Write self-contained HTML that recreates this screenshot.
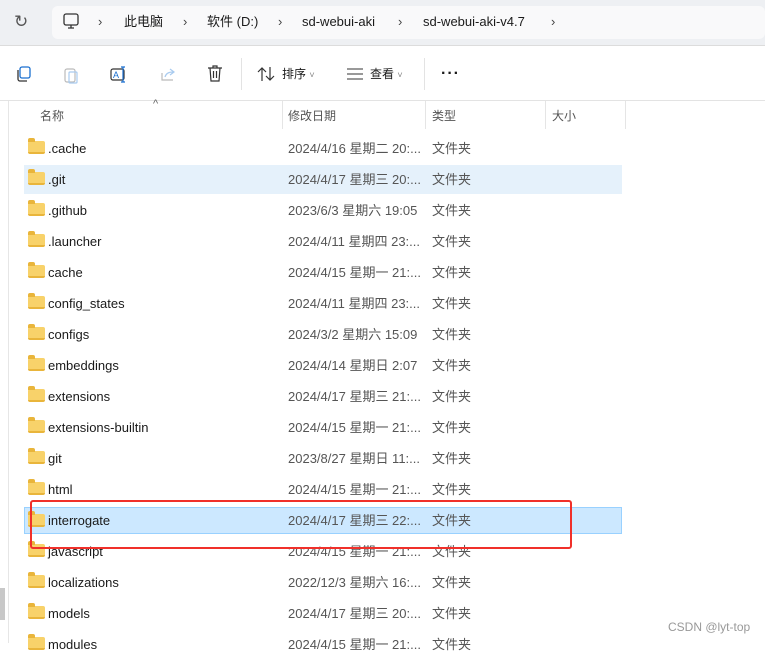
<!DOCTYPE html><html><head><meta charset="utf-8"><style>
*{margin:0;padding:0;box-sizing:border-box}
body{width:765px;height:643px;overflow:hidden;background:#fff;font-family:"Liberation Sans","Noto Sans CJK SC",sans-serif;font-size:13px;line-height:16px;color:#1a1a1a;position:relative}
.a{position:absolute;white-space:nowrap}
.top{position:absolute;left:0;top:0;width:765px;height:46px;background:#eef0f3;border-bottom:1px solid #dcdcdc}
.crumb{position:absolute;left:52px;top:6px;width:713px;height:33px;background:#f9f9fa;border-radius:6px}
.tb{position:absolute;left:0;top:47px;width:765px;height:54px;border-bottom:1px solid #e3e3e3}
.row{position:absolute;left:24px;width:598px;height:29px}
.row .n{position:absolute;left:24px;top:7px}
.row .d{position:absolute;left:264px;top:7px;color:#555}
.row .t{position:absolute;left:408px;top:7px;color:#555}
.f{position:absolute;left:4px;top:7px;width:17px;height:13px;background:#f8d26a;border-radius:2px;border-bottom:2px solid #e9b53b}
.f:before{content:"";position:absolute;left:0;top:-3px;width:7px;height:4px;background:#e9b53b;border-radius:2px 2px 0 0}
.sep{position:absolute;top:101px;width:1px;height:28px;background:#e5e5e5}
.hd{position:absolute;top:108px;color:#555;font-size:12px}
</style></head><body>
<div class="top"></div>
<div class="crumb"></div>
<div class="a" style="left:14px;top:12px;color:#555;font-size:17px;line-height:20px">↻</div>
<svg class="a" style="left:63px;top:13px" width="16" height="17"><rect x="1" y="1" width="14" height="11" rx="2" fill="none" stroke="#333" stroke-width="1.3"/><path d="M5 15h6M8 12v3" stroke="#333" stroke-width="1.3"/></svg>
<div class="a" style="left:98px;top:14px;color:#444">›</div>
<div class="a" style="left:124px;top:14px">此电脑</div>
<div class="a" style="left:183px;top:14px;color:#444">›</div>
<div class="a" style="left:207px;top:14px">软件 (D:)</div>
<div class="a" style="left:278px;top:14px;color:#444">›</div>
<div class="a" style="left:302px;top:14px">sd-webui-aki</div>
<div class="a" style="left:398px;top:14px;color:#444">›</div>
<div class="a" style="left:423px;top:14px">sd-webui-aki-v4.7</div>
<div class="a" style="left:551px;top:14px;color:#444">›</div>
<div class="tb"></div>
<svg class="a" style="left:15px;top:66px" width="16" height="16"><rect x="5" y="1" width="10" height="11" rx="2" fill="none" stroke="#1a6fd0" stroke-width="1.3"/><path d="M3 4v9a2 2 0 0 0 2 2h7" fill="none" stroke="#333" stroke-width="1.3"/></svg>
<svg class="a" style="left:63px;top:66px" width="16" height="18"><rect x="2" y="3" width="10" height="13" rx="2" fill="none" stroke="#bbb" stroke-width="1.2"/><rect x="6" y="6" width="8" height="11" rx="1" fill="none" stroke="#a9cbef" stroke-width="1.2"/></svg>
<svg class="a" style="left:110px;top:66px" width="18" height="17"><rect x="1" y="3" width="13" height="11" rx="2" fill="none" stroke="#333" stroke-width="1.2"/><text x="3" y="12" font-size="9" fill="#1a6fd0" font-family="Liberation Sans">A</text><path d="M13 1v15M11 1h4M11 16h4" stroke="#1a6fd0" stroke-width="1.2"/></svg>
<svg class="a" style="left:160px;top:67px" width="17" height="15"><path d="M2 6v7h11" fill="none" stroke="#bbb" stroke-width="1.2"/><path d="M5 10c1-4 4-5 8-5M10 2l4 3-4 3" fill="none" stroke="#a9cbef" stroke-width="1.2"/></svg>
<svg class="a" style="left:207px;top:65px" width="16" height="18"><path d="M1 3h14M6 3V1h4v2M3 3l1 13h8l1-13M6.5 6v7M9.5 6v7" fill="none" stroke="#333" stroke-width="1.2"/></svg>
<div class="a" style="left:241px;top:58px;width:1px;height:32px;background:#e3e3e3"></div>
<svg class="a" style="left:257px;top:66px" width="18" height="16"><path d="M5 15V2M1 6l4-4 4 4M13 1v13M9 10l4 4 4-4" fill="none" stroke="#333" stroke-width="1.2"/></svg>
<div class="a" style="left:282px;top:66px;font-size:12px">排序 <span style="color:#888;font-size:9px">˅</span></div>
<svg class="a" style="left:347px;top:68px" width="16" height="12"><path d="M0 1h16M0 6h16M0 11h16" stroke="#333" stroke-width="1.1"/></svg>
<div class="a" style="left:370px;top:66px;font-size:12px">查看 <span style="color:#888;font-size:9px">˅</span></div>
<div class="a" style="left:424px;top:58px;width:1px;height:32px;background:#e3e3e3"></div>
<div class="a" style="left:441px;top:66px;font-size:16px;font-weight:bold;letter-spacing:1px">···</div>
<div class="a" style="left:8px;top:101px;width:1px;height:542px;background:#e6e6e6"></div>
<div class="a" style="left:153px;top:96px;color:#666;font-size:11px">^</div>
<div class="hd" style="left:40px">名称</div>
<div class="sep" style="left:282px"></div>
<div class="hd" style="left:288px">修改日期</div>
<div class="sep" style="left:425px"></div>
<div class="hd" style="left:432px">类型</div>
<div class="sep" style="left:545px"></div>
<div class="hd" style="left:552px">大小</div>
<div class="sep" style="left:625px"></div>

<div class="row" style="top:134px"><div class="f"></div><div class="n">.cache</div><div class="d">2024/4/16 星期二 20:...</div><div class="t">文件夹</div></div>
<div class="row" style="top:165px;background:#e5f1fb"><div class="f"></div><div class="n">.git</div><div class="d">2024/4/17 星期三 20:...</div><div class="t">文件夹</div></div>
<div class="row" style="top:196px"><div class="f"></div><div class="n">.github</div><div class="d">2023/6/3 星期六 19:05</div><div class="t">文件夹</div></div>
<div class="row" style="top:227px"><div class="f"></div><div class="n">.launcher</div><div class="d">2024/4/11 星期四 23:...</div><div class="t">文件夹</div></div>
<div class="row" style="top:258px"><div class="f"></div><div class="n">cache</div><div class="d">2024/4/15 星期一 21:...</div><div class="t">文件夹</div></div>
<div class="row" style="top:289px"><div class="f"></div><div class="n">config_states</div><div class="d">2024/4/11 星期四 23:...</div><div class="t">文件夹</div></div>
<div class="row" style="top:320px"><div class="f"></div><div class="n">configs</div><div class="d">2024/3/2 星期六 15:09</div><div class="t">文件夹</div></div>
<div class="row" style="top:351px"><div class="f"></div><div class="n">embeddings</div><div class="d">2024/4/14 星期日 2:07</div><div class="t">文件夹</div></div>
<div class="row" style="top:382px"><div class="f"></div><div class="n">extensions</div><div class="d">2024/4/17 星期三 21:...</div><div class="t">文件夹</div></div>
<div class="row" style="top:413px"><div class="f"></div><div class="n">extensions-builtin</div><div class="d">2024/4/15 星期一 21:...</div><div class="t">文件夹</div></div>
<div class="row" style="top:444px"><div class="f"></div><div class="n">git</div><div class="d">2023/8/27 星期日 11:...</div><div class="t">文件夹</div></div>
<div class="row" style="top:475px"><div class="f"></div><div class="n">html</div><div class="d">2024/4/15 星期一 21:...</div><div class="t">文件夹</div></div>
<div class="row" style="top:507px;height:27px;background:#cce8ff;border:1px solid #99d1ff"><div class="f" style="top:6px;left:3px"></div><div class="n" style="top:5px;left:23px">interrogate</div><div class="d" style="top:5px;left:263px">2024/4/17 星期三 22:...</div><div class="t" style="top:5px;left:407px">文件夹</div></div>
<div class="row" style="top:537px"><div class="f"></div><div class="n">javascript</div><div class="d">2024/4/15 星期一 21:...</div><div class="t">文件夹</div></div>
<div class="row" style="top:568px"><div class="f"></div><div class="n">localizations</div><div class="d">2022/12/3 星期六 16:...</div><div class="t">文件夹</div></div>
<div class="row" style="top:599px"><div class="f"></div><div class="n">models</div><div class="d">2024/4/17 星期三 20:...</div><div class="t">文件夹</div></div>
<div class="row" style="top:630px"><div class="f"></div><div class="n">modules</div><div class="d">2024/4/15 星期一 21:...</div><div class="t">文件夹</div></div>
<div class="a" style="left:30px;top:500px;width:542px;height:49px;border:2px solid #f0302a;border-radius:3px"></div>
<div class="a" style="left:0;top:588px;width:5px;height:32px;background:#c8c8c8"></div>
<div class="a" style="left:668px;top:619px;color:#999;font-size:12px">CSDN @lyt-top</div>
</body></html>
